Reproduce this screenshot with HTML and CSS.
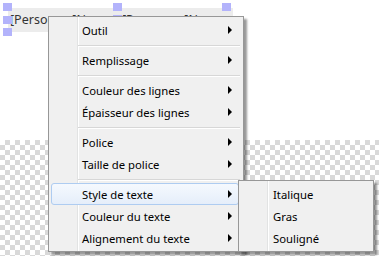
FILE: index.html
```html
<!DOCTYPE html>
<html lang="fr">
<head>
    <meta charset="UTF-8">
    <title>Diagramme</title>
    <link rel="stylesheet" href="styles.css">
</head>
<body>

    <div class="canvas-top">
        <div class="shape-strip">
            <div class="shape-label"><span>[Personne</span><span>]N</span></div>
            <div class="shape-label second"><span>[Personne</span><span>]N</span></div>
        </div>
        <span class="handle h1"></span>
        <span class="handle h2"></span>
        <span class="handle h3"></span>
        <span class="handle h4"></span>
        <span class="handle h5"></span>
        <span class="handle h6"></span>
    </div>
    <div class="canvas-checker"></div>

    <ul class="menu main-menu">
        <li class="item">Outil<i class="arrow"></i></li>
        <li class="sep"></li>
        <li class="item">Remplissage<i class="arrow"></i></li>
        <li class="sep"></li>
        <li class="item">Couleur des lignes<i class="arrow"></i></li>
        <li class="item">Épaisseur des lignes<i class="arrow"></i></li>
        <li class="sep"></li>
        <li class="item">Police<i class="arrow"></i></li>
        <li class="item">Taille de police<i class="arrow"></i></li>
        <li class="sep"></li>
        <li class="item active">Style de texte<i class="arrow"></i></li>
        <li class="item">Couleur du texte<i class="arrow"></i></li>
        <li class="item">Alignement du texte<i class="arrow"></i></li>
    </ul>

    <ul class="menu sub-menu">
        <li class="item">Italique</li>
        <li class="item">Gras</li>
        <li class="item">Souligné</li>
    </ul>

</body>
</html>
```

FILE: styles.css
```css
body {
    margin: 0;
    font-family: "Noto Sans", "Open Sans", sans-serif;
    font-size: 11.3px;
    background-color: #fff;
    overflow: hidden;
}
.canvas-top {
    height: 140px;
    padding-top: 8px;
    box-sizing: border-box;
}
.shape-strip {
    display: flex;
    margin-left: 8px;
    width: 225px;
    height: 24px;
    background-color: #ececec;
}
.shape-label {
    display: flex;
    justify-content: space-between;
    width: 76px;
    margin-left: 2px;
    line-height: 16px;
    padding-top: 4px;
    font-size: 12.5px;
    color: #333;
}
.shape-label.second {
    margin-left: 36px;
}
.handle {
    position: absolute;
    width: 9px;
    height: 8px;
    background-color: #b3b3fb;
}
.h1 { left: 3px; top: 3px; }
.h2 { left: 3px; top: 16px; }
.h3 { left: 3px; top: 28px; }
.h4 { left: 113px; top: 3px; }
.h5 { left: 113px; top: 15px; }
.h6 { left: 222px; top: 3px; }
.canvas-checker {
    height: 116px;
    background: conic-gradient(#d9d9d9 25%, #fff 0 50%, #d9d9d9 0 75%, #fff 0) 0 0 / 10px 10px;
}

/* context menus */
.menu {
    position: absolute;
    margin: 0;
    padding: 2px;
    list-style: none;
    box-sizing: border-box;
    border: 1px solid #979797;
    background: linear-gradient(to right, #f0f0f0 28px, #e2e3e3 28px, #e2e3e3 29px, #fff 29px, #fff 30px, #f0f0f0 30px);
    box-shadow: 3px 3px 2px rgba(0, 0, 0, 0.4);
    color: #000;
}
.main-menu {
    left: 48px;
    top: 16px;
    width: 196px;
}
.sub-menu {
    left: 238px;
    top: 180px;
    width: 136px;
}
.item {
    display: flex;
    align-items: center;
    height: 22px;
    box-sizing: border-box;
    padding-left: 30px;
    padding-right: 6px;
    margin-right: 2px;
    border: 1px solid transparent;
    border-radius: 3px;
}
.sub-menu .item {
    padding-left: 31px;
}
.item.active {
    border-color: #aeccf1;
    background: linear-gradient(#f5f9fe, #e5eefa);
}
.arrow {
    margin-left: auto;
    width: 0;
    height: 0;
    border-left: 4px solid #000;
    border-top: 4px solid transparent;
    border-bottom: 4px solid transparent;
}
.sep {
    height: 0;
    margin: 4px 1px 2px 27px;
    border-top: 1px solid #d7d7d7;
    border-bottom: 1px solid #fff;
}
```
